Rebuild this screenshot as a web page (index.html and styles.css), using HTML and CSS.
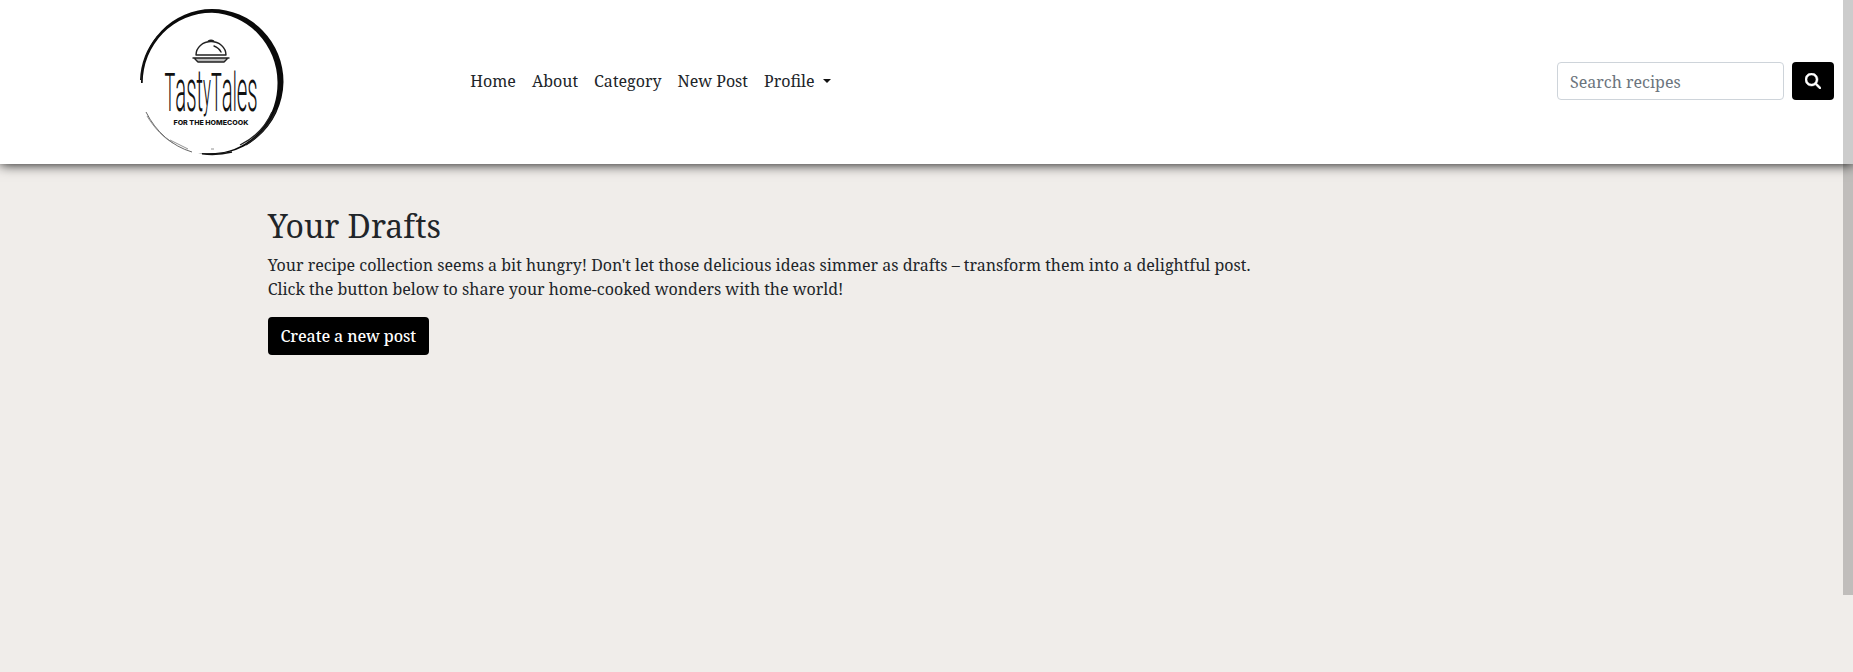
FILE: index.html
```
<!DOCTYPE html>
<html lang="en">
<head>
<meta charset="utf-8">
<title>TastyTales</title>
<link rel="stylesheet" href="styles.css">
</head>
<body>
<header class="navbar">
  <a class="brand">
    <svg class="logo" viewBox="0 0 165 164" width="165" height="164">
      <path d="M11 83A71 73 0 0 1 82 9A71.500 73 0 0 1 153.500 82A72 73.500 0 0 1 68 153Q81 154 94 152A66 70 0 0 0 147.500 82A68 70 0 0 0 82 12.800A69 70 0 0 0 12.700 83Z" fill="#0a0a0a"/>
      <path d="M10.800 80A71 72 0 0 1 28 36M72 153.800C82 155 92 154.500 102 152" fill="none" stroke="#111" stroke-width="1.6"/>
      <path d="M110 145C124 138 136 126 142 112M116 145C130 136 140 125 146 110" fill="none" stroke="#222" stroke-width="1.3"/>
      <path d="M16 112C26 132 42 146 62 152" fill="none" stroke="#555" stroke-width=".9"/>
      <path d="M17 116C25 129 34 138 43 143M40 140L58 149M81 149H84" fill="none" stroke="#777" stroke-width=".8"/>
      <path d="M63.500 58H98.500L95 62H67Z" fill="#bbb"/>
      <g fill="none" stroke="#222" stroke-width="1.4" stroke-linejoin="round" stroke-linecap="round">
        <path d="M66 55A15 13.500 0 0 1 96 55ZM78 42C78 39.500 84 39.500 84 42M84 46Q89 48 91 52M63 58H99M65 59L68 62H94L97 59"/>
      </g>
      <text class="wordmark" transform="translate(34.500 110.700) scale(.34 1)"><tspan class="cap">T</tspan><tspan>ast</tspan><tspan class="tail" dy="-5">y</tspan><tspan class="cap" dy="5">T</tspan><tspan>a</tspan><tspan class="cap">l</tspan><tspan>es</tspan></text>
      <text class="tagline" x="43.500" y="125" textLength="75" lengthAdjust="spacingAndGlyphs">FOR THE HOMECOOK</text>
    </svg>
  </a>
  <nav class="links">
    <a>Home</a><a>About</a><a>Category</a><a>New Post</a><a class="dropdown">Profile</a>
  </nav>
  <form class="search">
    <input class="field" type="text" placeholder="Search recipes">
    <button class="btn" type="button" aria-label="Search"><svg width="16" height="16" viewBox="0 0 512 512"><path fill="#fff" stroke="#fff" stroke-width="16" d="M416 208c0 45.900-14.900 88.300-40 122.700L502.600 457.400c12.500 12.500 12.500 32.800 0 45.300s-32.800 12.500-45.300 0L330.700 376c-34.400 25.200-76.800 40-122.700 40C93.100 416 0 322.900 0 208S93.100 0 208 0S416 93.100 416 208zM208 352a144 144 0 1 0 0-288 144 144 0 1 0 0 288z"/></svg></button>
  </form>
</header>
<main class="content">
  <h2 class="title">Your Drafts</h2>
  <p class="lead">Your recipe collection seems a bit hungry! Don't let those delicious ideas simmer as drafts – transform them into a delightful post.<br>Click the button below to share your home-cooked wonders with the world!</p>
  <button class="btn create" type="button">Create a new post</button>
</main>
<div class="scrollbar"></div>
</body>
</html>
```
FILE: styles.css
```
* { box-sizing: border-box; }
body {
  margin: 0;
  height: 672px;
  overflow: hidden;
  background: #f0edea;
  color: #212529;
  font: 16px/24px "Noto Serif", "Droid Serif", "DejaVu Serif", serif;
}
.navbar {
  display: flex;
  align-items: center;
  height: 164px;
  padding: 0 19px 0 130px;
  background: #fff;
  box-shadow: 0 0 12px #000;
}
.brand { display: block; width: 165px; height: 164px; }
.logo { display: block; }
.wordmark { font-family: Roboto, sans-serif; font-weight: 300; font-size: 60px; fill: #111; }
.cap { font-size: 53px; }
.tail { font-size: 49px; }
.tagline { font: 800 6.5px Inter, sans-serif; fill: #111; }
.links { display: flex; gap: 16px; margin: 0 0 2px 175.300px; }
.dropdown::after {
  content: "";
  display: inline-block;
  margin-left: 8px;
  vertical-align: 4px;
  border: 4.8px solid transparent;
  border-top-color: #111;
  border-bottom: 0;
}
.search { display: flex; gap: 8px; margin: 0 0 2px auto; }
.field {
  width: 227px;
  height: 38px;
  padding: 7px 12px 5px;
  border: 1px solid #ced4da;
  border-radius: 4px;
  font: inherit;
}
.field::placeholder { color: #6c757d; opacity: 1; }
.btn {
  height: 38px;
  padding: 6px 13px;
  border: 0;
  border-radius: 4px;
  background: #000;
  color: #fff;
  font: inherit;
}
.btn svg { display: block; margin: auto; }
.content { padding: 43px 267.700px 0; }
.title { margin: 0 0 8px; font-size: 32px; line-height: 38px; font-weight: 400; }
.lead { margin: 0 0 16px; white-space: nowrap; }
.create { width: 161px; padding: 6px 12px; font-weight: 500; letter-spacing: -.11px; white-space: nowrap; }
.scrollbar {
  position: absolute;
  top: 0;
  right: 0;
  width: 10px;
  height: 595px;
  background: rgba(0, 0, 0, .2);
}
```
